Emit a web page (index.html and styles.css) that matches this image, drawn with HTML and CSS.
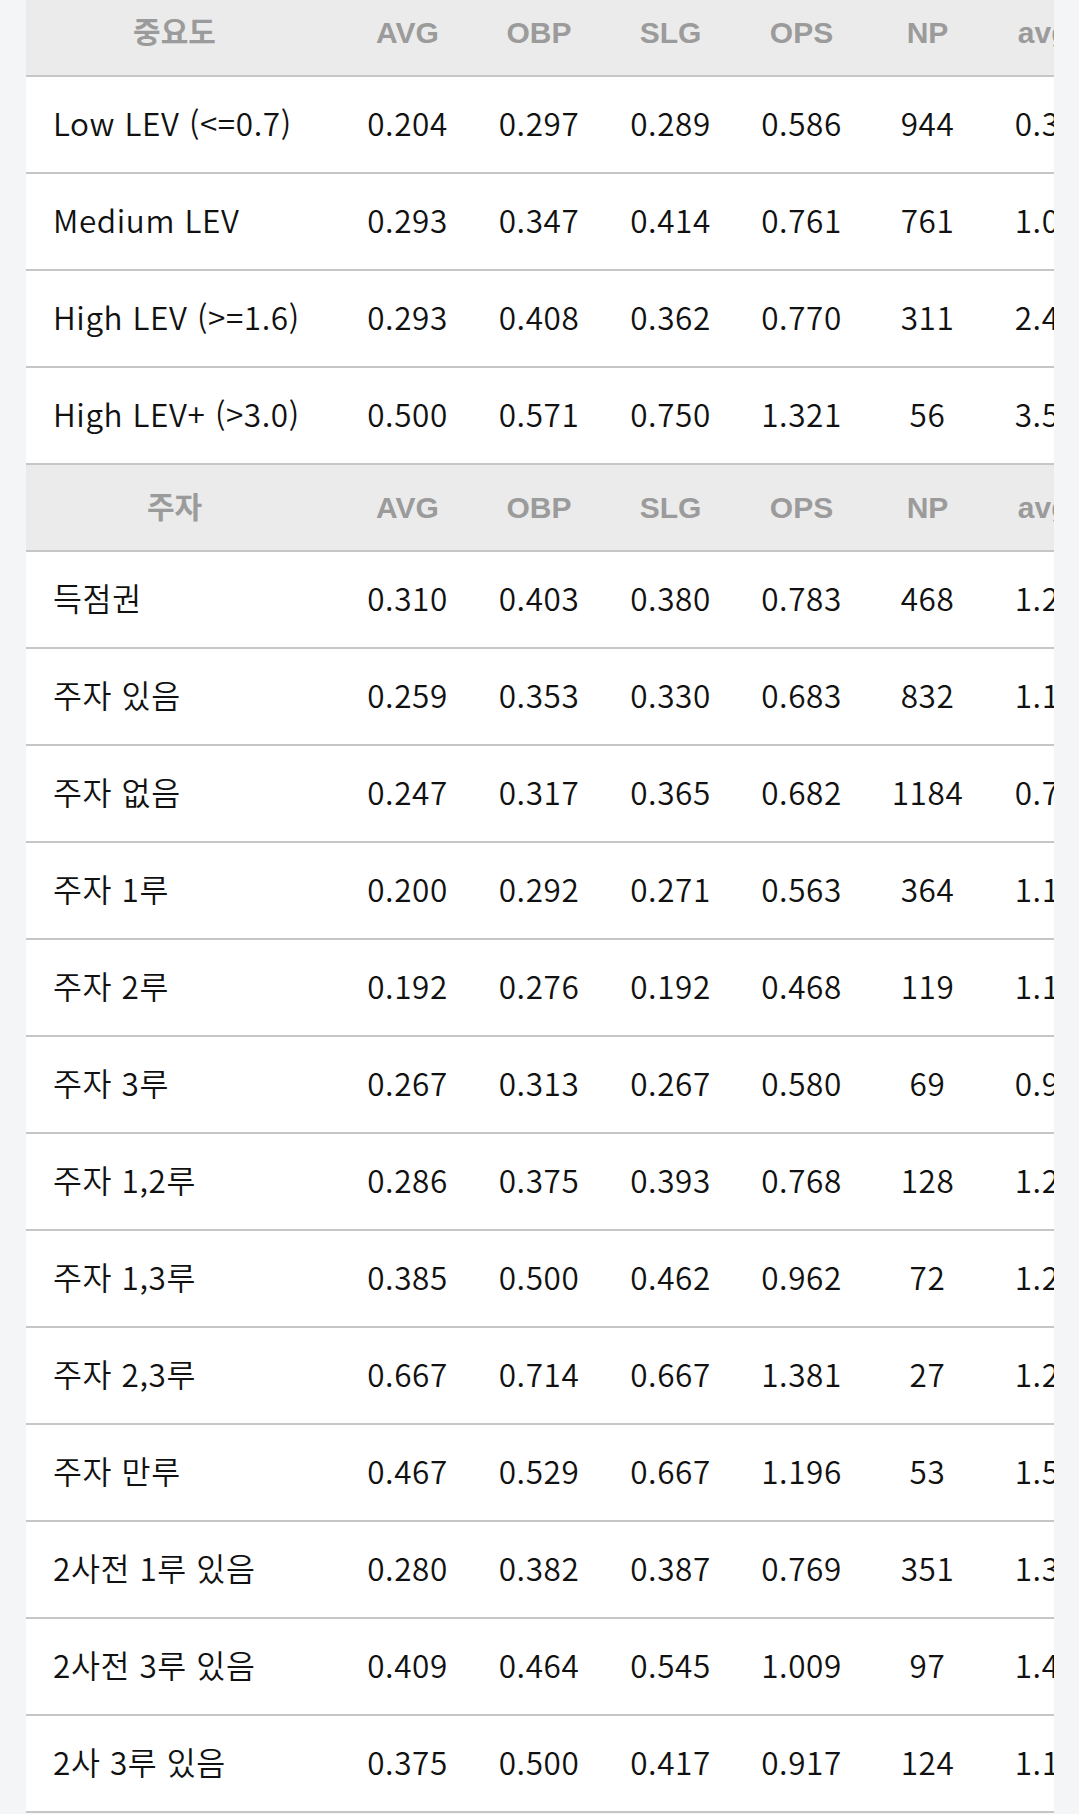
FILE: index.html
```html
<!DOCTYPE html>
<html lang="ko">
<head>
<meta charset="utf-8">
<link rel="stylesheet" href="styles.css">
</head>
<body>
<div class="page">
  <div class="table">
    <div class="row head"><div class="c lbl">중요도</div><div class="c">AVG</div><div class="c">OBP</div><div class="c">SLG</div><div class="c">OPS</div><div class="c">NP</div><div class="c last">avgLI</div></div>
    <div class="row"><div class="c lbl">Low LEV (&lt;=0.7)</div><div class="c">0.204</div><div class="c">0.297</div><div class="c">0.289</div><div class="c">0.586</div><div class="c">944</div><div class="c">0.352</div></div>
    <div class="row"><div class="c lbl">Medium LEV</div><div class="c">0.293</div><div class="c">0.347</div><div class="c">0.414</div><div class="c">0.761</div><div class="c">761</div><div class="c">1.046</div></div>
    <div class="row"><div class="c lbl">High LEV (&gt;=1.6)</div><div class="c">0.293</div><div class="c">0.408</div><div class="c">0.362</div><div class="c">0.770</div><div class="c">311</div><div class="c">2.412</div></div>
    <div class="row"><div class="c lbl">High LEV+ (&gt;3.0)</div><div class="c">0.500</div><div class="c">0.571</div><div class="c">0.750</div><div class="c">1.321</div><div class="c">56</div><div class="c">3.528</div></div>
    <div class="row head"><div class="c lbl">주자</div><div class="c">AVG</div><div class="c">OBP</div><div class="c">SLG</div><div class="c">OPS</div><div class="c">NP</div><div class="c last">avgLI</div></div>
    <div class="row"><div class="c lbl">득점권</div><div class="c">0.310</div><div class="c">0.403</div><div class="c">0.380</div><div class="c">0.783</div><div class="c">468</div><div class="c">1.244</div></div>
    <div class="row"><div class="c lbl">주자 있음</div><div class="c">0.259</div><div class="c">0.353</div><div class="c">0.330</div><div class="c">0.683</div><div class="c">832</div><div class="c">1.168</div></div>
    <div class="row"><div class="c lbl">주자 없음</div><div class="c">0.247</div><div class="c">0.317</div><div class="c">0.365</div><div class="c">0.682</div><div class="c">1184</div><div class="c">0.731</div></div>
    <div class="row"><div class="c lbl">주자 1루</div><div class="c">0.200</div><div class="c">0.292</div><div class="c">0.271</div><div class="c">0.563</div><div class="c">364</div><div class="c">1.102</div></div>
    <div class="row"><div class="c lbl">주자 2루</div><div class="c">0.192</div><div class="c">0.276</div><div class="c">0.192</div><div class="c">0.468</div><div class="c">119</div><div class="c">1.135</div></div>
    <div class="row"><div class="c lbl">주자 3루</div><div class="c">0.267</div><div class="c">0.313</div><div class="c">0.267</div><div class="c">0.580</div><div class="c">69</div><div class="c">0.947</div></div>
    <div class="row"><div class="c lbl">주자 1,2루</div><div class="c">0.286</div><div class="c">0.375</div><div class="c">0.393</div><div class="c">0.768</div><div class="c">128</div><div class="c">1.263</div></div>
    <div class="row"><div class="c lbl">주자 1,3루</div><div class="c">0.385</div><div class="c">0.500</div><div class="c">0.462</div><div class="c">0.962</div><div class="c">72</div><div class="c">1.218</div></div>
    <div class="row"><div class="c lbl">주자 2,3루</div><div class="c">0.667</div><div class="c">0.714</div><div class="c">0.667</div><div class="c">1.381</div><div class="c">27</div><div class="c">1.274</div></div>
    <div class="row"><div class="c lbl">주자 만루</div><div class="c">0.467</div><div class="c">0.529</div><div class="c">0.667</div><div class="c">1.196</div><div class="c">53</div><div class="c">1.559</div></div>
    <div class="row"><div class="c lbl">2사전 1루 있음</div><div class="c">0.280</div><div class="c">0.382</div><div class="c">0.387</div><div class="c">0.769</div><div class="c">351</div><div class="c">1.327</div></div>
    <div class="row"><div class="c lbl">2사전 3루 있음</div><div class="c">0.409</div><div class="c">0.464</div><div class="c">0.545</div><div class="c">1.009</div><div class="c">97</div><div class="c">1.486</div></div>
    <div class="row"><div class="c lbl">2사 3루 있음</div><div class="c">0.375</div><div class="c">0.500</div><div class="c">0.417</div><div class="c">0.917</div><div class="c">124</div><div class="c">1.153</div></div>
  </div>
</div>
</body>
</html>
```
FILE: styles.css
```css
html, body {
  margin: 0;
  padding: 0;
  background: #f4f5f7;
}
.page {
  padding: 0 25px 0 26px;
  margin-top: -10px;
}
.table {
  background: #ffffff;
  overflow: hidden;
  width: 1028px;
}
.row {
  display: grid;
  grid-template-columns: 316px 131px 132px 131px 131px 121px 134px;
  width: 1096px;
  height: 95px;
  border-bottom: 2px solid #c6c6c6;
  align-items: center;
  font-family: "Noto Sans CJK KR", "Noto Sans", sans-serif;
  font-size: 31.5px;
  font-weight: 350;
  letter-spacing: 0.6px;
  line-height: 1.2;
  color: #111111;
}
.row > .c {
  padding-bottom: 4px;
}
.row.head {
  height: 85px;
  background: #ebebeb;
  font-family: "Liberation Sans", Arial, "Noto Sans CJK KR", sans-serif;
  font-weight: bold;
  font-size: 30px;
  letter-spacing: 0;
  color: #9b9b9b;
}
.row.head > .c {
  padding-bottom: 0;
}
.c {
  text-align: center;
  white-space: nowrap;
}
.row.head .last {
  padding-left: 4px;
}
.row .lbl {
  text-align: left;
  padding-left: 27px;
}
.row.head .lbl {
  text-align: center;
  padding: 0 19px 0 0;
}
```
